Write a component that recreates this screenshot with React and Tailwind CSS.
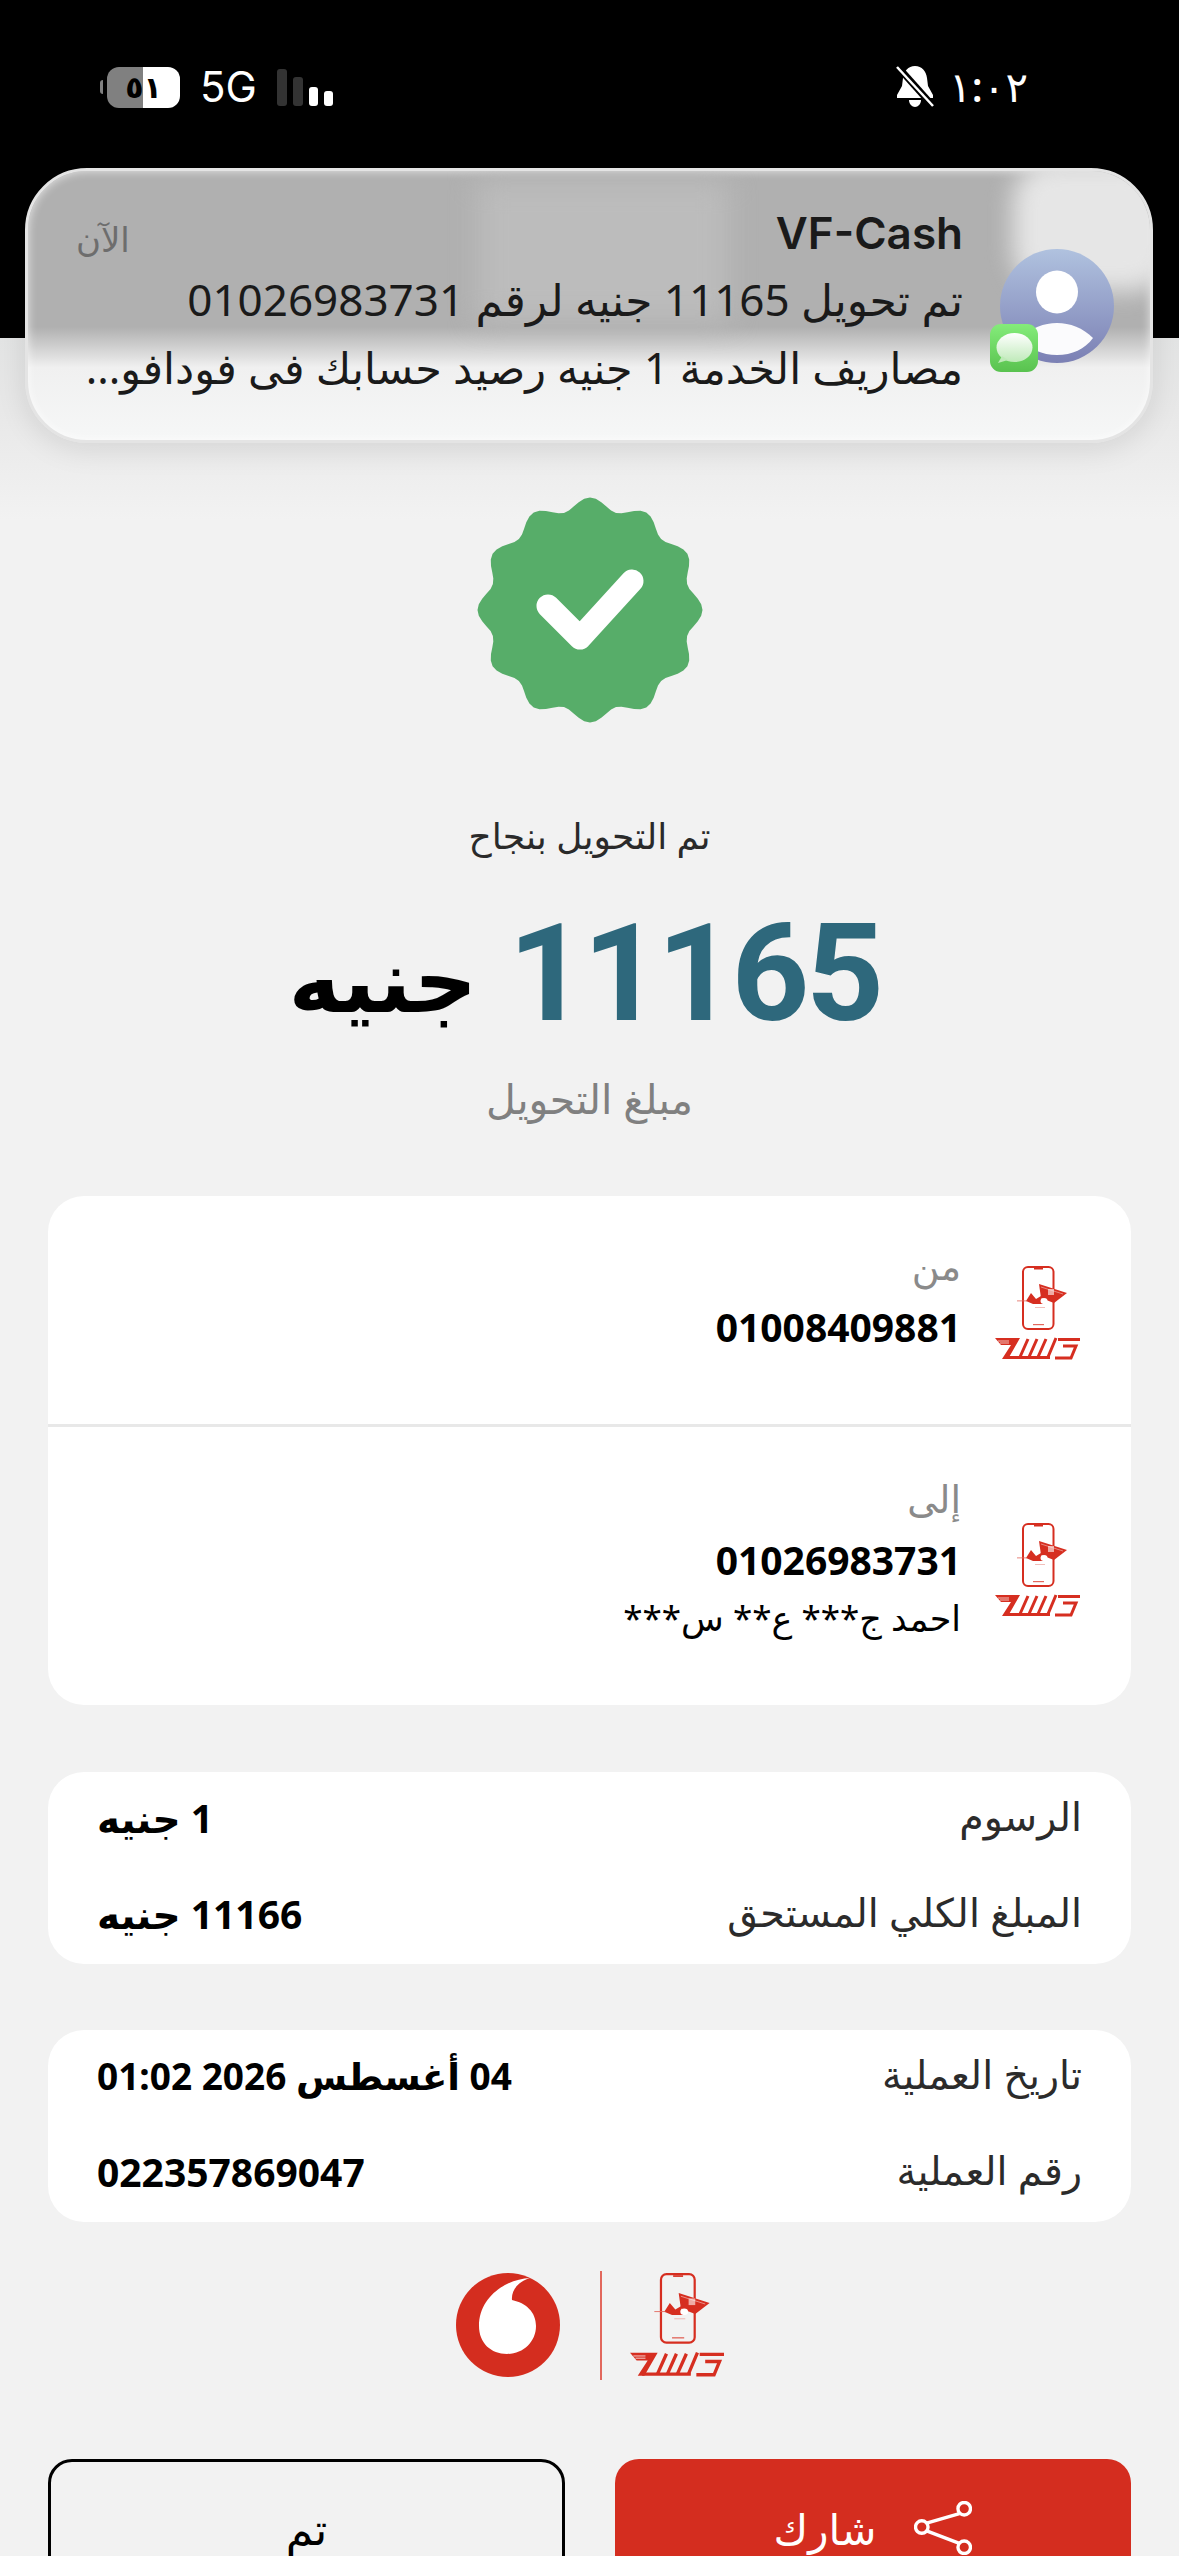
// Cash transfer receipt with an incoming message banner
const arabic = "font-['Noto_Sans','DejaVu_Sans',sans-serif]";

// wavy seal outline, 12 lobes
const sealPath = () => {
  const pts = [];
  for (let i = 0; i < 360; i += 3) {
    const a = (i * Math.PI) / 180;
    const r = 106.5 + 6 * Math.cos(12 * a);
    pts.push(`${(113 + r * Math.sin(a)).toFixed(1)},${(113 - r * Math.cos(a)).toFixed(1)}`);
  }
  return `M${pts.join('L')}Z`;
};

const CashLogo = ({ className }) => (
  <svg viewBox="0 0 85 94" className={className}>
    <rect x="28" y="1" width="30.5" height="62" rx="5" fill="none" stroke="#d62e20" strokeWidth="2" />
    <rect x="39" y="2" width="9" height="1.5" fill="#d62e20" />
    <rect x="38" y="58" width="11" height="1.2" fill="#e2685d" />
    <polygon points="44,18 72,27 59,37 46,32" fill="#d62e20" />
    <polygon points="31,35 36,27 41,33 46,30 48,38 38,38" fill="#d62e20" />
    <rect x="22" y="34.5" width="10" height="0.8" fill="#e2685d" />
    <rect x="53" y="23" width="6" height="6" fill="#fff" opacity="0.6" />
    <path d="M46 21 L68 28" stroke="#fff" strokeWidth="0.6" opacity="0.7" />
    <ellipse cx="49" cy="35" rx="3.5" ry="3" fill="#fff" />
    <rect x="40" y="41" width="10" height="0.8" fill="#eeb0aa" />
    <polygon points="0,72 25,72 13,93 7,93 16,79 6,79" fill="#d62e20" />
    <path d="M3 75 H14 M5 77 H14" stroke="#fff" strokeWidth="0.7" />
    <path d="M11 91.5 H55" stroke="#d62e20" strokeWidth="3" />
    <path d="M33 73 L25 91 M42 73 L34 91 M51 73 L43 91 M61 72 L53 91" fill="none" stroke="#d62e20" strokeWidth="3" />
    <path d="M63 73.5 H85 M68 80 H81 L76 92 H60" fill="none" stroke="#d62e20" strokeWidth="3" />
  </svg>
);

const InfoRow = ({ label, value, valueClass = 'text-[39px]' }) => (
  <div className="flex items-center justify-between h-[96px] pb-[6px]" dir="rtl">
    <span className="text-[39.5px] text-[#2b2b2b] leading-none">{label}</span>
    <span className={`font-bold text-black leading-none ${valueClass}`}>{value}</span>
  </div>
);

const PartyRow = ({ label, number, name, className, logoClass }) => (
  <div className={`flex justify-end ${className}`}>
    <div className="flex flex-col items-start" dir="rtl">
      <span className="text-[38px] text-[#8a8a8a] leading-[63px]">{label}</span>
      <span className="text-[39px] font-bold text-black leading-[60px] font-['Open_Sans',sans-serif]">{number}</span>
      {name && <span className="text-[35px] text-black leading-[56px]">{name}</span>}
    </div>
    <CashLogo className={`w-[85px] h-[94px] ml-[34px] mr-[51px] ${logoClass}`} />
  </div>
);

const StatusBar = () => (
  <div className="h-[338px] bg-black flex items-start justify-between pl-[100px] pr-[151px] pt-[66px]">
    <div className="flex items-center">
      <div className="w-[3px] h-[14px] bg-[#808080] rounded-l mr-[4px]" />
      <div className="w-[73px] h-[41px] rounded-[12px] overflow-hidden bg-[linear-gradient(90deg,#808080_49%,#ffffff_49%)] flex items-center justify-center">
        <span className={`text-[30px] font-bold text-black leading-none ${arabic}`}>٥١</span>
      </div>
      <span className="ml-[20px] text-[42px] text-white leading-none font-['Inter',sans-serif]">5G</span>
      <div className="ml-[20px] flex items-end gap-[6px] h-[38px]">
        <div className="w-[10px] h-[37px] rounded-[3px] bg-[#333333]" />
        <div className="w-[10px] h-[29px] rounded-[3px] bg-[#333333]" />
        <div className="w-[9px] h-[19px] rounded-[3px] bg-white" />
        <div className="w-[9px] h-[15px] rounded-[3px] bg-white" />
      </div>
    </div>
    <div className="flex items-center -mt-[2px]">
      <svg viewBox="0 0 40 44" className="w-[40px] h-[44px]">
        <path d="M20 2c-7 0-11 5-12 12l-1 8-5 9v3h36v-3l-5-9-1-8C31 7 27 2 20 2z" fill="#fff" />
        <path d="M14 36c0 4 3 7 6 7s6-3 6-7z" fill="#fff" />
        <path d="M3 3l34 38" stroke="#000" strokeWidth="7" />
        <path d="M2 3l36 39" stroke="#fff" strokeWidth="2.5" />
      </svg>
      <span className={`ml-[14px] text-[42px] font-medium text-white leading-[44px] tracking-[-3px] ${arabic}`}>١:٠٢</span>
    </div>
  </div>
);

const Notification = () => (
  <div className="absolute left-[25px] top-[168px] w-[1128px] h-[275px] rounded-[62px] overflow-hidden border-[3px] border-[#e4e4e4] bg-[linear-gradient(180deg,#b0b0b0_0%,#b0b0b0_58%,#f0f0f0_73%,#f6f7f7_100%)] shadow-[0_6px_30px_rgba(0,0,0,0.1),inset_0_0_10px_rgba(255,255,255,0.7)]">
    <div className="absolute left-[450px] top-[10px] w-[250px] h-[140px] bg-[#bcbcbc] blur-[14px]" />
    <div className="absolute left-[985px] top-[-10px] w-[160px] h-[130px] rounded-[40px] bg-[#e6e6e6] blur-[12px]" />
    <span className={`absolute left-[48px] top-[40px] text-[34px] text-[#6d6d6d] leading-[56px] ${arabic}`} dir="rtl">الآن</span>
    <div className="absolute right-[187px] top-[31px] flex flex-col items-end text-[#1a1a1a]">
      <span className="text-[44px] font-semibold leading-[62px] font-['Inter',sans-serif]">VF-Cash</span>
      <span className={`text-[44px] leading-[70px] whitespace-nowrap ${arabic}`} dir="rtl">تم تحويل 11165 جنيه لرقم 01026983731</span>
      <span className={`text-[43px] leading-[68px] whitespace-nowrap ${arabic}`} dir="rtl">مصاريف الخدمة 1 جنيه رصيد حسابك فى فودافو...</span>
    </div>
    <svg viewBox="0 0 114 114" className="absolute left-[972px] top-[78px] w-[114px] h-[114px]">
      <defs>
        <linearGradient id="avatarFill" x1="0" y1="0" x2="0" y2="1">
          <stop offset="0" stopColor="#b0c2df" />
          <stop offset="1" stopColor="#7b80b4" />
        </linearGradient>
      </defs>
      <circle cx="57" cy="57" r="57" fill="url(#avatarFill)" />
      <ellipse cx="57" cy="43" rx="21" ry="21.5" fill="#fff" />
      <path d="M21 89C31 79 44 74 57 74s26 5 36 15c-8 11-21 17-36 17s-28-6-36-17z" fill="#fbfbfd" />
    </svg>
    <div className="absolute left-[962px] top-[153px] w-[48px] h-[48px] rounded-[11px] bg-[linear-gradient(180deg,#84ec7a,#59c24f)]">
      <svg viewBox="0 0 48 48" className="w-[48px] h-[48px]">
        <defs>
          <linearGradient id="bubbleFill" x1="0" y1="0" x2="0" y2="1">
            <stop offset="0" stopColor="#ffffff" />
            <stop offset="1" stopColor="#bfeab9" />
          </linearGradient>
        </defs>
        <ellipse cx="24.5" cy="23.5" rx="18" ry="14.5" fill="url(#bubbleFill)" />
        <path d="M12 32l-4 7 10-3z" fill="#bfeab9" />
      </svg>
    </div>
  </div>
);

export default function App() {
  return (
    <div className={`relative w-[1179px] h-[2556px] overflow-hidden bg-[#f2f2f2] ${arabic}`}>
      <StatusBar />
      <Notification />
      <div className="h-[182px] bg-[linear-gradient(180deg,#e3e4e4_0%,#e8e8e8_40%,#f2f2f2_100%)] -mb-[24px]" />

      <div className="relative flex flex-col items-center">
        <svg viewBox="0 0 226 226" className="w-[226px] h-[226px] mt-[1px]">
          <path d={sealPath()} fill="#57ad69" />
          <path d="M71 109 L103 141 L155 84" fill="none" stroke="#fff" strokeWidth="23" strokeLinecap="round" strokeLinejoin="round" />
        </svg>
        <p className="mt-[85px] text-[36px] leading-[56px] text-[#2a2a2a]" dir="rtl">تم التحويل بنجاح</p>
        <div className="mt-[42px] mr-[10px] flex items-center gap-[31px] h-[136px]" dir="rtl">
          <span className="text-[136px] font-bold text-[#2e687c] leading-none tracking-[-3.6px] font-['Roboto',sans-serif]">11165</span>
          <span className="text-[88px] font-bold text-black leading-none mt-[8px]">جنيه</span>
        </div>
        <p className="mt-[26px] text-[41px] leading-[60px] text-[#808080]" dir="rtl">مبلغ التحويل</p>
      </div>

      <div className="px-[48px] pt-[68px] flex flex-col">
        <div className="h-[509px] bg-white rounded-[36px] flex flex-col">
          <PartyRow label="من" number="01008409881" className="h-[231px] pt-[38px] border-b-[3px] border-[#e8e8e8]" logoClass="mt-[32px]" />
          <PartyRow label="إلى" number="01026983731" name="احمد ج*** ع** س***" className="pt-[40px]" logoClass="mt-[56px]" />
        </div>

        <div className="mt-[67px] h-[192px] bg-white rounded-[36px] px-[49px]">
          <InfoRow label="الرسوم" value="1  جنيه" />
          <InfoRow label="المبلغ الكلي المستحق" value="11166  جنيه" />
        </div>

        <div className="mt-[66px] h-[192px] bg-white rounded-[36px] px-[49px]">
          <InfoRow label="تاريخ العملية" value="04 أغسطس 2026 01:02" valueClass="text-[37px]" />
          <InfoRow label="رقم العملية" value="022357869047" />
        </div>

        <div className="mt-[48px] flex items-center justify-center h-[110px]">
          <svg viewBox="0 0 104 104" className="w-[104px] h-[104px]">
            <circle cx="52" cy="52" r="52" fill="#d42d1f" />
            <path d="M74 5C50 6 23 24 23 53c0 17 12 28 28 28 16 0 29-12 29-28 0-14-10-23-24-26-1-10 7-19 18-22z" fill="#fff" />
          </svg>
          <div className="ml-[40px] mr-[28px] w-[2px] h-[109px] bg-[#e2685d]" />
          <CashLogo className="w-[94px] h-[104px]" />
        </div>

        <div className="mt-[79px] flex justify-between">
          <button className="w-[517px] h-[138px] rounded-[24px] border-[3px] border-black text-[44px] text-black">تم</button>
          <button className="w-[516px] h-[138px] rounded-[24px] bg-[#d42d1f] text-white text-[42px] flex items-center justify-center gap-[38px]" dir="rtl">
            <svg viewBox="0 0 60 56" className="w-[58px] h-[54px]" fill="none" stroke="#fff" strokeWidth="3.5">
              <circle cx="52" cy="8" r="6.5" />
              <circle cx="8" cy="27" r="6.5" />
              <circle cx="52" cy="48" r="6.5" />
              <path d="M47 13 L13 23 M13 31 L47 44" />
            </svg>
            <span>شارك</span>
          </button>
        </div>
      </div>
    </div>
  );
}
